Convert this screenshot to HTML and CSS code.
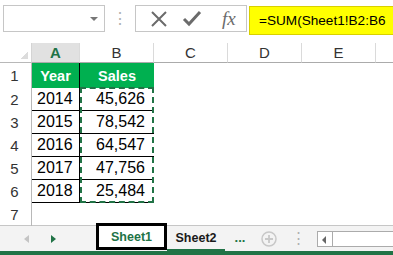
FILE: index.html
```html
<!DOCTYPE html>
<html lang="en">
<head>
    <meta charset="UTF-8">
    <title>Sheet1</title>
    <link rel="stylesheet" href="styles.css">
</head>
<body>
    <!-- Formula bar -->
    <div class="formula-bar">
        <div class="name-box"><span class="drop"></span></div>
        <div class="grip">⋮</div>
        <div class="fn-box">
            <svg width="18" height="18" viewBox="0 0 18 18"><path d="M2 2 L16 16 M16 2 L2 16" stroke="#6b6b6b" stroke-width="2" fill="none"/></svg>
            <svg width="20" height="18" viewBox="0 0 20 18"><path d="M2 9 L7 14 L18 2" stroke="#6b6b6b" stroke-width="3" fill="none"/></svg>
            <span class="fx">fx</span>
        </div>
        <div class="formula">=SUM(Sheet1!B2:B6</div>
    </div>

    <!-- Grid -->
    <div class="sheet">
        <div class="corner"></div>
        <div class="col-head active">A</div>
        <div class="col-head">B</div>
        <div class="col-head">C</div>
        <div class="col-head">D</div>
        <div class="col-head">E</div>
        <div class="col-head last"></div>

        <div class="row-head">1</div>
        <div class="cell title">Year</div>
        <div class="cell title">Sales</div>
        <div class="cell blank"></div><div class="cell blank"></div><div class="cell blank"></div><div class="cell blank"></div>

        <div class="row-head">2</div>
        <div class="cell year">2014</div>
        <div class="cell num">45,626</div>
        <div class="cell blank"></div><div class="cell blank"></div><div class="cell blank"></div><div class="cell blank"></div>

        <div class="row-head">3</div>
        <div class="cell year">2015</div>
        <div class="cell num">78,542</div>
        <div class="cell blank"></div><div class="cell blank"></div><div class="cell blank"></div><div class="cell blank"></div>

        <div class="row-head">4</div>
        <div class="cell year">2016</div>
        <div class="cell num">64,547</div>
        <div class="cell blank"></div><div class="cell blank"></div><div class="cell blank"></div><div class="cell blank"></div>

        <div class="row-head">5</div>
        <div class="cell year">2017</div>
        <div class="cell num">47,756</div>
        <div class="cell blank"></div><div class="cell blank"></div><div class="cell blank"></div><div class="cell blank"></div>

        <div class="row-head">6</div>
        <div class="cell year">2018</div>
        <div class="cell num">25,484</div>
        <div class="cell blank"></div><div class="cell blank"></div><div class="cell blank"></div><div class="cell blank"></div>

        <div class="row-head">7</div>
        <div class="cell blank"></div><div class="cell blank"></div><div class="cell blank"></div>
        <div class="cell blank"></div><div class="cell blank"></div><div class="cell blank"></div>

        <!-- copy marquee around B2:B6 -->
        <div class="marquee"></div>
    </div>

    <!-- Sheet tabs -->
    <div class="tab-bar">
        <div class="nav">
            <span class="arrow-left"></span>
            <span class="arrow-right"></span>
        </div>
        <div class="tab current">Sheet1</div>
        <div class="tab other">Sheet2</div>
        <div class="more">...</div>
        <div class="add">
            <svg width="16" height="16" viewBox="0 0 16 16"><circle cx="8" cy="8" r="7" stroke="#c8c8c8" stroke-width="1.5" fill="none"/><path d="M8 4 V12 M4 8 H12" stroke="#c8c8c8" stroke-width="1.8"/></svg>
        </div>
        <div class="grip small">⋮</div>
        <div class="hscroll"><span class="scroll-btn"></span></div>
    </div>
    <div class="status-line"></div>
</body>
</html>
```

FILE: styles.css
```css
body {
    margin: 0;
    width: 393px;
    height: 255px;
    overflow: hidden;
    background: #fff;
    font-family: "Liberation Sans", Arial, sans-serif;
    color: #000;
}

/* formula bar */
.formula-bar {
    display: flex;
    align-items: flex-start;
    height: 43px;
    padding: 5px 0 0 3px;
    box-sizing: border-box;
}

.name-box {
    width: 102px;
    height: 27px;
    box-sizing: border-box;
    border: 1px solid #c6c6c6;
    position: relative;
}

.drop {
    position: absolute;
    right: 6px;
    top: 11px;
    border-left: 4px solid transparent;
    border-right: 4px solid transparent;
    border-top: 4px solid #777;
}

.grip {
    width: 30px;
    text-align: center;
    color: #b0b0b0;
    font-size: 16px;
    line-height: 27px;
}

.fn-box {
    width: 112px;
    height: 27px;
    box-sizing: border-box;
    border: 1px solid #c6c6c6;
    display: flex;
    align-items: center;
    gap: 14px;
    padding-left: 14px;
}

.fx {
    font-family: "Liberation Serif", serif;
    font-style: italic;
    font-size: 19px;
    color: #6b6b6b;
    margin-left: 6px;
}

.formula {
    flex: 1;
    height: 29px;
    margin-left: 2px;
    margin-top: 1px;
    box-sizing: border-box;
    background: #ffff00;
    border: 1px solid #d8d000;
    border-right: none;
    font-size: 13.6px;
    line-height: 27px;
    padding-left: 9px;
    white-space: nowrap;
}

/* grid */
.sheet {
    display: grid;
    grid-template-columns: 32px 48px 74px 74px 74px 74px 17px;
    grid-template-rows: 20px 25px repeat(6, 23px);
    position: relative;
}

.corner {
    border-bottom: 1px solid #b8b8b8;
    border-right: 1px solid #d4d4d4;
    background: linear-gradient(135deg, transparent 72%, #dcdcdc 72%);
    background-size: 14px 14px;
    background-repeat: no-repeat;
    background-position: right 3px bottom 3px;
}

.col-head {
    border-bottom: 1px solid #ababab;
    border-right: 1px solid #dadada;
    font-size: 15px;
    color: #333;
    text-align: center;
    line-height: 20px;
}

.col-head.active {
    background: #e1e1e1;
    color: #217346;
    font-weight: bold;
}

.col-head.last {
    border-right: none;
}

.row-head {
    border-right: 1px solid #b8b8b8;
    font-size: 15px;
    color: #333;
    display: flex;
    align-items: center;
    justify-content: center;
    padding-right: 2px;
}

.cell {
    font-size: 16px;
    display: flex;
    align-items: center;
    white-space: nowrap;
}

.cell.title {
    background: #00b050;
    color: #fff;
    font-weight: bold;
    font-size: 14.5px;
    justify-content: center;
    border-right: 1px solid #000;
}

.cell.title + .cell.title {
    border-right: none;
}

.cell.year {
    border-bottom: 1px solid #000;
    border-right: 1px solid #000;
    padding-left: 5px;
}

.cell.num {
    border-bottom: 1px solid #000;
    justify-content: flex-end;
    padding-right: 9px;
}

/* copy marquee drawn over the cells of B2:B6 */
.marquee {
    grid-column: 3 / 4;
    grid-row: 3 / 8;
    position: absolute;
    top: -1px;
    left: 0;
    right: 0;
    bottom: 0;
    border: 2px dashed #217346;
    pointer-events: none;
}

/* sheet tabs */
.tab-bar {
    display: flex;
    align-items: stretch;
    height: 26px;
    background: #f3f3f3;
    border-top: 1px solid #c6c6c6;
    box-sizing: border-box;
    margin-top: -1px;
}

.nav {
    width: 96px;
    display: flex;
    align-items: center;
    gap: 22px;
    padding-left: 24px;
    box-sizing: border-box;
}

.arrow-left {
    border-top: 4px solid transparent;
    border-bottom: 4px solid transparent;
    border-right: 5px solid #c4c4c4;
}

.arrow-right {
    border-top: 4px solid transparent;
    border-bottom: 4px solid transparent;
    border-left: 5px solid #217346;
}

.tab {
    font-size: 12.5px;
    font-weight: bold;
    display: flex;
    align-items: center;
    justify-content: center;
}

.tab.current {
    width: 71px;
    box-sizing: border-box;
    border: 3px solid #000;
    background: #fff;
    color: #217346;
    margin-top: -3px;
    height: 27px;
}

.tab.other {
    width: 58px;
    color: #1a1a1a;
    box-sizing: border-box;
    border-bottom: 2px solid #217346;
    padding-top: 1px;
}

.more {
    width: 30px;
    color: #217346;
    font-weight: bold;
    font-size: 13px;
    text-align: center;
    line-height: 24px;
}

.add {
    width: 28px;
    display: flex;
    align-items: center;
    justify-content: center;
}

.grip.small {
    width: 30px;
    font-size: 15px;
    line-height: 24px;
}

.hscroll {
    flex: 1;
    margin: 5px 0 4px 4px;
    border: 1px solid #ababab;
    border-right: none;
    background: #fff;
    display: flex;
}

.scroll-btn {
    width: 14px;
    border-right: 1px solid #ababab;
    background: #fff;
    position: relative;
}

.scroll-btn::after {
    content: "";
    position: absolute;
    left: 4px;
    top: 4px;
    border-top: 4px solid transparent;
    border-bottom: 4px solid transparent;
    border-right: 4px solid #666;
}

.status-line {
    height: 4px;
    background: #217346;
}
```
